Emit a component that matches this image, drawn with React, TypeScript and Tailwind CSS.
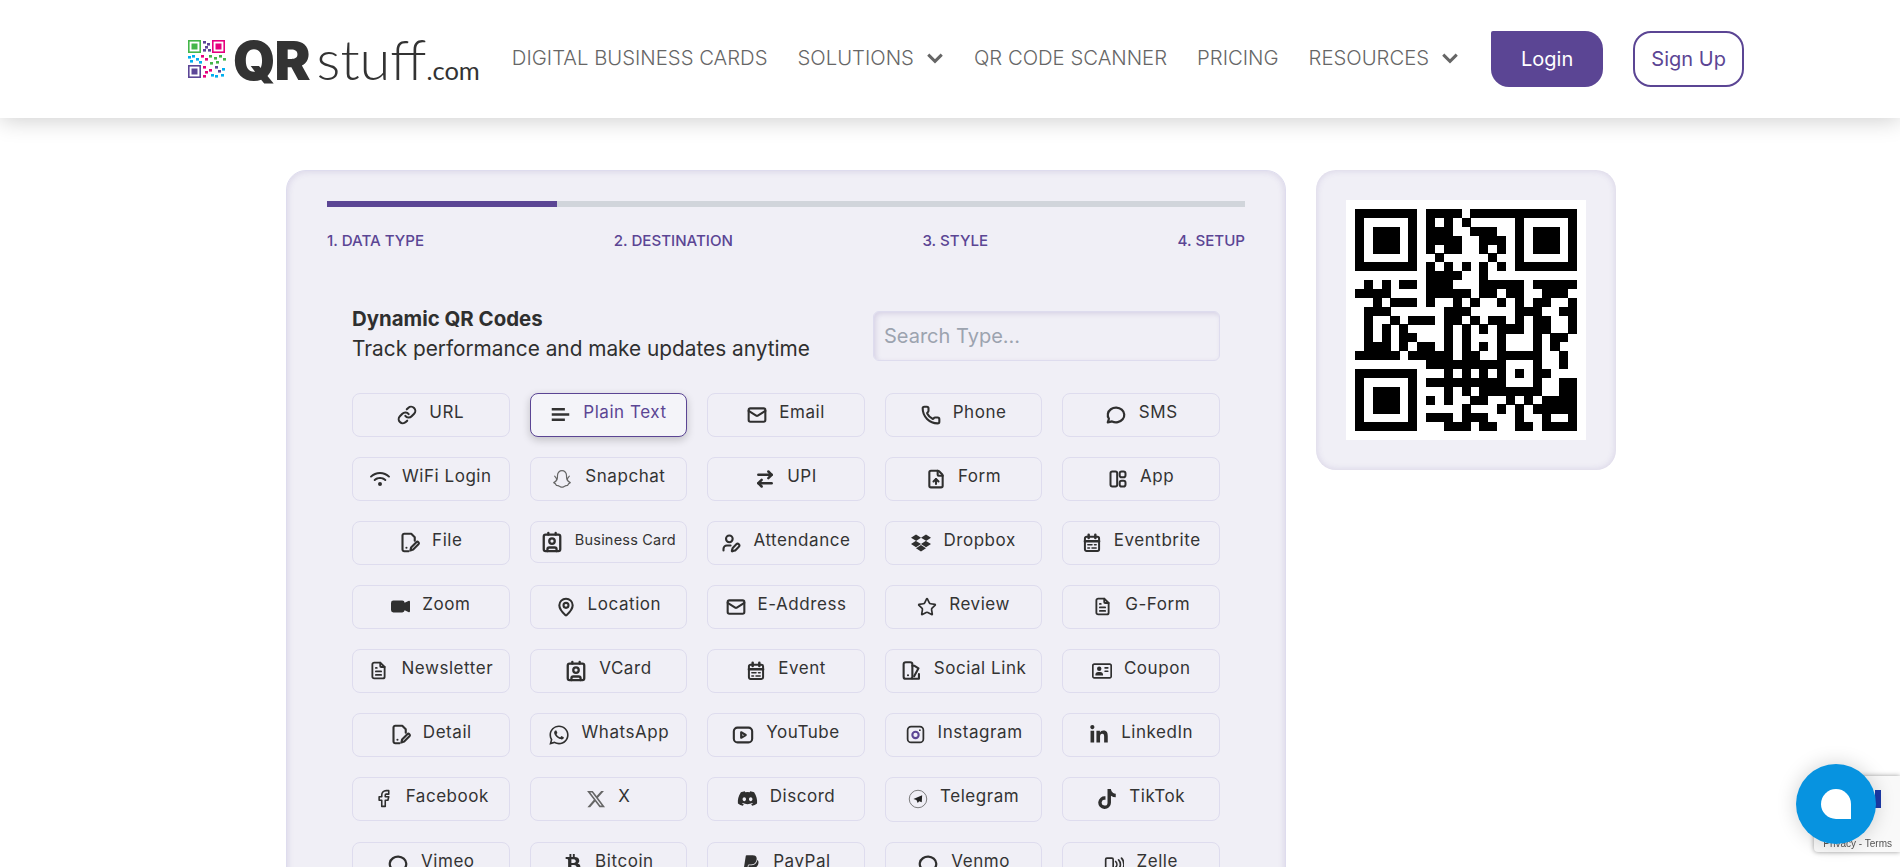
import {
  Link,
  Mail,
  Phone,
  ArrowRightLeft,
  FileUp,
  Contact,
  UserPen,
  MapPin,
  Star,
} from "lucide-react";
import {
  FaDropbox,
  FaWhatsapp,
  FaDiscord,
  FaTiktok,
  FaBtc,
  FaPaypal,
  FaLinkedinIn,
  FaXTwitter,
  FaRegAddressCard,
  FaWifi,
} from "react-icons/fa6";
import { BsCameraVideoFill } from "react-icons/bs";
import {
  TbBrandSnapchat,
  TbBrandFacebook,
  TbBrandYoutube,
  TbFileText,
  TbMessageCircle,
} from "react-icons/tb";
import type { ReactNode } from "react";

const sans = "font-['Inter','Liberation_Sans',sans-serif]";

// 25x25 modules, read off the picture
const QR_ROWS: number[][] = [
  [0, 1, 2, 3, 4, 5, 6, 8, 9, 10, 11, 13, 14, 15, 16, 17, 18, 19, 20, 21, 22, 23, 24],
  [0, 6, 8, 10, 12, 18, 24],
  [0, 2, 3, 4, 6, 8, 9, 10, 13, 14, 15, 18, 20, 21, 22, 24],
  [0, 2, 3, 4, 6, 8, 9, 10, 11, 14, 15, 16, 18, 20, 21, 22, 24],
  [0, 2, 3, 4, 6, 8, 10, 11, 14, 16, 18, 20, 21, 22, 24],
  [0, 6, 9, 15, 18, 24],
  [0, 1, 2, 3, 4, 5, 6, 8, 10, 12, 14, 16, 18, 19, 20, 21, 22, 23, 24],
  [8, 9, 10, 11, 14],
  [1, 3, 5, 6, 8, 9, 10, 14, 15, 16, 17, 18, 20, 21, 22, 23, 24],
  [0, 1, 2, 3, 8, 9, 10, 11, 12, 14, 15, 17, 18, 21, 22, 23],
  [2, 4, 5, 6, 8, 11, 13, 16, 18, 20, 21, 24],
  [1, 2, 3, 10, 11, 12, 18, 19, 20, 23, 24],
  [1, 4, 6, 7, 8, 10, 11, 13, 15, 16, 18, 20, 21, 24],
  [1, 3, 5, 10, 12, 14, 16, 17, 18, 20, 21, 24],
  [1, 3, 5, 6, 10, 12, 16, 20, 22, 23],
  [1, 2, 3, 5, 7, 8, 10, 12, 14, 16, 20, 22],
  [0, 1, 2, 3, 4, 6, 7, 8, 9, 10, 12, 13, 16, 17, 18, 19, 20, 23],
  [8, 9, 10, 11, 12, 13, 14, 15, 16, 20, 23],
  [0, 1, 2, 3, 4, 5, 6, 10, 12, 14, 16, 18, 20, 21],
  [0, 6, 8, 9, 10, 11, 12, 13, 14, 15, 16, 20, 23, 24],
  [0, 2, 3, 4, 6, 10, 12, 14, 15, 16, 17, 18, 19, 20, 23, 24],
  [0, 2, 3, 4, 6, 8, 10, 13, 14, 17, 19, 21, 22, 23, 24],
  [0, 2, 3, 4, 6, 12, 16, 18, 20, 21, 22, 23, 24],
  [0, 6, 8, 9, 10, 12, 13, 14, 18, 21, 24],
  [0, 1, 2, 3, 4, 5, 6, 10, 11, 12, 14, 15, 18, 19, 21, 22, 23, 24],
];

function QrCode() {
  return (
    <svg viewBox="-1 -1 27 27" shapeRendering="crispEdges" className="h-[240px] w-[240px] bg-white">
      {QR_ROWS.map((row, y) =>
        row.map((x) => <rect key={`${x}-${y}`} x={x} y={y} width="1.02" height="1.02" fill="#000" />),
      )}
    </svg>
  );
}

function LogoMark() {
  const c = ["#44b649", "#5c4697", "#e6007e", "#00aeef"];
  const cells: [number, number, number, number, string][] = [
    [0, 0, 13, 13, c[0]], [24, 0, 13, 13, c[2]], [0, 25, 13, 13, c[1]],
  ];
  const bits: [number, number, string][] = [
    [15, 1, c[1]], [19, 3, c[1]], [17, 6, c[1]], [15, 9, c[1]], [20, 9, c[1]],
    [0, 16, c[3]], [4, 15, c[3]], [8, 18, c[3]], [2, 20, c[3]], [13, 15, c[2]],
    [17, 18, c[2]], [11, 21, c[3]], [21, 15, c[0]], [26, 17, c[0]], [31, 15, c[0]],
    [35, 18, c[0]], [28, 21, c[0]], [22, 22, c[0]], [15, 26, c[2]], [17, 31, c[2]],
    [15, 35, c[2]], [21, 29, c[2]], [23, 34, c[3]], [27, 26, c[1]], [30, 30, c[1]],
    [34, 28, c[3]], [27, 35, c[3]], [33, 34, c[3]],
  ];
  return (
    <svg viewBox="0 0 38 38" className="h-[38px] w-[38px] shrink-0">
      {cells.map(([x, y, w, h, col]) => (
        <g key={`${x}-${y}`}>
          <rect x={x + 0.8} y={y + 0.8} width={w - 1.6} height={h - 1.6} fill="none" stroke={col} strokeWidth="1.6" />
          <rect x={x + 3.5} y={y + 3.5} width={w - 7} height={h - 7} fill={col} />
        </g>
      ))}
      {bits.map(([x, y, col]) => (
        <rect key={`${x}-${y}`} x={x} y={y} width="3" height="2.6" fill={col} />
      ))}
    </svg>
  );
}

const svgBase = {
  fill: "none",
  stroke: "currentColor",
  strokeWidth: 2.4,
  strokeLinecap: "round" as const,
  strokeLinejoin: "round" as const,
  viewBox: "0 0 24 24",
};

function Chevron() {
  return (
    <svg {...svgBase} strokeWidth={4} strokeLinecap="butt" strokeLinejoin="miter" className="h-[18px] w-[18px]">
      <path d="M3 7.5l9 9 9-9" />
    </svg>
  );
}

function TextLines() {
  return (
    <svg {...svgBase} className="h-[21px] w-[21px]" strokeWidth={2.6} strokeLinecap="butt">
      <path d="M2 6h15M2 12h20M2 18h15" />
    </svg>
  );
}

function AppGrid() {
  return (
    <svg {...svgBase} className="h-[20px] w-[20px]">
      <rect x="3" y="3" width="8" height="18" rx="2" />
      <rect x="14" y="3" width="7" height="7" rx="2.5" />
      <rect x="14" y="14" width="7" height="7" rx="2.5" />
    </svg>
  );
}

function FilePenIcon() {
  return (
    <svg {...svgBase} className="h-[21px] w-[21px]">
      <path d="M11 22H6a2 2 0 0 1-2-2V4a2 2 0 0 1 2-2h8l4 4v4" />
      <path d="M13 21l.8-3.4 6-6a1.7 1.7 0 0 1 2.4 2.4l-6 6z" />
      <path d="M8.500 18h.01" />
    </svg>
  );
}

function CalendarIcon() {
  return (
    <svg {...svgBase} className="h-[20px] w-[20px]">
      <rect x="3.500" y="4.500" width="17" height="17" rx="2" />
      <path d="M8 2v4M16 2v4M3.500 10h17" strokeWidth={3} />
      <path d="M7 14h5M15 14h2M7 18h2M12 18h5" strokeWidth={1.8} />
    </svg>
  );
}

function SocialLinkIcon() {
  return (
    <svg {...svgBase} className="h-[21px] w-[21px]">
      <rect x="3" y="2.500" width="10" height="19" rx="2.500" />
      <path d="M8 17.500h.01M13 6.500h2l5 3-5 9M13 21.500h7.500V16" />
    </svg>
  );
}

function InstagramIcon() {
  return (
    <svg {...svgBase} strokeWidth={2} className="h-[21px] w-[21px]">
      <rect x="3" y="3" width="18" height="18" rx="4" />
      <circle cx="12" cy="12.500" r="3.600" stroke="#5b4594" strokeWidth={2.4} />
      <path d="M17 7h.01" />
    </svg>
  );
}

function TelegramIcon() {
  return (
    <svg viewBox="0 0 24 24" className="h-[20px] w-[20px]">
      <circle cx="12" cy="12" r="10.500" fill="none" stroke="#555" strokeWidth="0.9" />
      <path d="M17 7.500 6.500 12l3.600 1.200 1.600 3.600 1.700-2 3.100 1.200z" fill="#222" />
    </svg>
  );
}

function ZelleIcon() {
  return (
    <svg {...svgBase} strokeWidth={2} className="h-[20px] w-[20px]">
      <rect x="2" y="5" width="9" height="15" rx="1.500" />
      <path d="M14 9a5 5 0 0 1 0 7M17.500 7a8 8 0 0 1 0 11M21 5a11 11 0 0 1 0 15" />
    </svg>
  );
}

type Kind = { label: string; icon: ReactNode; active?: boolean; small?: boolean; tall?: boolean; muted?: boolean };

const lu = { size: 20, strokeWidth: 2.5 };
const fa = "h-[20px] w-[20px]";
const bubble = <TbMessageCircle size={22} strokeWidth={2.4} />;
const doc = <TbFileText size={21} strokeWidth={2.1} />;

const KINDS: Kind[] = [
  { label: "URL", icon: <Link {...lu} /> },
  { label: "Plain Text", icon: <TextLines />, active: true },
  { label: "Email", icon: <Mail {...lu} /> },
  { label: "Phone", icon: <Phone {...lu} /> },
  { label: "SMS", icon: bubble },
  { label: "WiFi Login", icon: <FaWifi className={fa} /> },
  { label: "Snapchat", icon: <TbBrandSnapchat size={22} strokeWidth={1.3} />, muted: true },
  { label: "UPI", icon: <ArrowRightLeft {...lu} strokeWidth={3} /> },
  { label: "Form", icon: <FileUp {...lu} /> },
  { label: "App", icon: <AppGrid /> },
  { label: "File", icon: <FilePenIcon /> },
  { label: "Business Card", icon: <Contact size={22} strokeWidth={2.5} />, small: true },
  { label: "Attendance", icon: <UserPen {...lu} /> },
  { label: "Dropbox", icon: <FaDropbox className={fa} /> },
  { label: "Eventbrite", icon: <CalendarIcon /> },
  { label: "Zoom", icon: <BsCameraVideoFill className="h-[19px] w-[19px]" /> },
  { label: "Location", icon: <MapPin {...lu} /> },
  { label: "E-Address", icon: <Mail {...lu} /> },
  { label: "Review", icon: <Star {...lu} strokeWidth={2} /> },
  { label: "G-Form", icon: doc },
  { label: "Newsletter", icon: doc },
  { label: "VCard", icon: <Contact size={22} strokeWidth={2.5} /> },
  { label: "Event", icon: <CalendarIcon /> },
  { label: "Social Link", icon: <SocialLinkIcon /> },
  { label: "Coupon", icon: <FaRegAddressCard className={fa} /> },
  { label: "Detail", icon: <FilePenIcon /> },
  { label: "WhatsApp", icon: <FaWhatsapp className="h-[22px] w-[22px]" /> },
  { label: "YouTube", icon: <TbBrandYoutube size={22} strokeWidth={2.3} /> },
  { label: "Instagram", icon: <InstagramIcon /> },
  { label: "LinkedIn", icon: <FaLinkedinIn className={fa} /> },
  { label: "Facebook", icon: <TbBrandFacebook size={21} strokeWidth={1.8} /> },
  { label: "X", icon: <FaXTwitter className={fa} />, muted: true },
  { label: "Discord", icon: <FaDiscord className="h-[21px] w-[21px]" /> },
  { label: "Telegram", icon: <TelegramIcon />, tall: true },
  { label: "TikTok", icon: <FaTiktok className={fa} /> },
  { label: "Vimeo", icon: bubble },
  { label: "Bitcoin", icon: <FaBtc className={fa} /> },
  { label: "PayPal", icon: <FaPaypal className={fa} /> },
  { label: "Venmo", icon: bubble },
  { label: "Zelle", icon: <ZelleIcon /> },
];

function KindButton({ kind }: { kind: Kind }) {
  return (
    <button
      type="button"
      className={`flex items-center justify-center gap-[12px] self-start rounded-lg border ${
        kind.small ? "h-[42px]" : kind.tall ? "h-[45px]" : "h-[44px]"
      } ${
        kind.active
          ? "border-[#5b4594] bg-[#f4f4f9] text-[#5b4594] shadow-[0_3px_8px_rgba(0,0,0,0.2)]"
          : "border-[#dedcee] text-[#333]"
      }`}
    >
      <span className={kind.muted ? "text-[#666]" : kind.active ? "text-[#333]" : "text-[#2f2f2f]"}>{kind.icon}</span>
      <span className={`-mt-1 whitespace-nowrap ${kind.small ? "text-[14.5px] tracking-[0.2px]" : "text-[17px] tracking-[0.55px]"}`}>
        {kind.label}
      </span>
    </button>
  );
}

function NavLink({ children, menu }: { children: string; menu?: boolean }) {
  return (
    <a className="-mt-[2px] flex items-center gap-3 text-[20.3px] font-light whitespace-nowrap text-[#666]">
      {children}
      {menu && <Chevron />}
    </a>
  );
}

export default function App() {
  return (
    <div className={`h-[867px] overflow-hidden bg-white ${sans}`}>
      <header className="relative flex h-[118px] items-center bg-white pl-[188px] shadow-[0_2px_22px_rgba(0,0,0,0.2)]">
        <div className="mr-[32px] flex items-center gap-[7px]">
          <LogoMark />
          <div className="flex items-baseline text-[#333]">
            <span className="text-[54px] leading-none font-black tracking-[-1px]">QR</span>
            <span className="ml-[7px] font-['Lato',sans-serif] text-[56px] leading-none font-light">stuff</span>
            <span className="font-['Lato',sans-serif] text-[25.5px] leading-none">.com</span>
          </div>
        </div>
        <nav className="flex items-center gap-[30px]">
          <NavLink>DIGITAL BUSINESS CARDS</NavLink>
          <NavLink menu>SOLUTIONS</NavLink>
          <NavLink>QR CODE SCANNER</NavLink>
          <NavLink>PRICING</NavLink>
          <NavLink menu>RESOURCES</NavLink>
        </nav>
        <a className="ml-[32px] flex h-[56px] w-[112px] items-center justify-center rounded-[18px] rounded-tl-[2px] bg-[#5b4594] text-[20px] text-white">
          Login
        </a>
        <a className="ml-[30px] flex h-[56px] w-[111px] items-center justify-center rounded-[18px] border-2 border-[#5b4594] text-[20px] text-[#5b4594]">
          Sign Up
        </a>
      </header>

      <main className="mt-[52px] ml-[286px] flex w-[1330px] items-start gap-[30px]">
        <section className="w-[1000px] rounded-t-[20px] border border-[#dedcee] bg-[#f0eff6] px-[40px] pt-[30px] pb-10 shadow-[inset_0_0_7px_rgba(91,69,148,0.18)]">
          <div className="h-[6px] bg-[#d1d5db]">
            <div className="h-full w-1/4 bg-[#5b4594]" />
          </div>
          <div className="mt-[23px] flex justify-between text-[15.1px] font-medium text-[#5b4594]">
            <span>1. DATA TYPE</span>
            <span>2. DESTINATION</span>
            <span>3. STYLE</span>
            <span>4. SETUP</span>
          </div>
          <div className="mx-[25px] mt-[51px]">
            <div className="flex items-center justify-between">
              <div className="mb-[4px] text-[#2f2f2f]">
                <h2 className="text-[20.4px] leading-[30px] font-bold">Dynamic QR Codes</h2>
                <p className="text-[20.8px] leading-[30px]">Track performance and make updates anytime</p>
              </div>
              <input
                placeholder="Search Type..."
                className="h-[50px] w-[347px] rounded-md border border-[#dedcee] bg-[#f0eff6] px-[10px] text-[20px] shadow-[inset_2px_2px_5px_rgba(91,69,148,0.16)] outline-none placeholder:text-[#9ca3af]"
              />
            </div>
            <div className="mt-[25px] grid grid-cols-5 gap-x-[20px] gap-y-[20px]">
              {KINDS.map((kind) => (
                <KindButton key={kind.label} kind={kind} />
              ))}
            </div>
          </div>
        </section>

        <aside className="flex h-[300px] w-[300px] items-center justify-center rounded-[20px] bg-[#f0eff6] shadow-[inset_0_0_7px_rgba(91,69,148,0.18)]">
          <QrCode />
        </aside>
      </main>

      {/* recaptcha badge + chat launcher sit over the page */}
      <div className="fixed right-0 bottom-[15px] h-[76px] w-[86px] rounded-l-sm bg-[#f9f9f9] shadow-[0_0_5px_rgba(0,0,0,0.4)]">
        <span className="absolute top-[14px] right-[19px] h-[18px] w-[6px] bg-[#1c3aa9]" />
        <span className="absolute right-[8px] bottom-[1px] font-['Liberation_Sans',sans-serif] text-[10px] whitespace-nowrap text-[#555]">
          Privacy - Terms
        </span>
      </div>
      <div className="fixed right-[24px] bottom-[23px] flex h-[80px] w-[80px] items-center justify-center rounded-full bg-[#0793e0] shadow-[0_0_20px_rgba(0,0,0,0.18)]">
        <span className="h-[30px] w-[30px] rounded-t-full rounded-bl-full bg-white" />
      </div>
    </div>
  );
}
